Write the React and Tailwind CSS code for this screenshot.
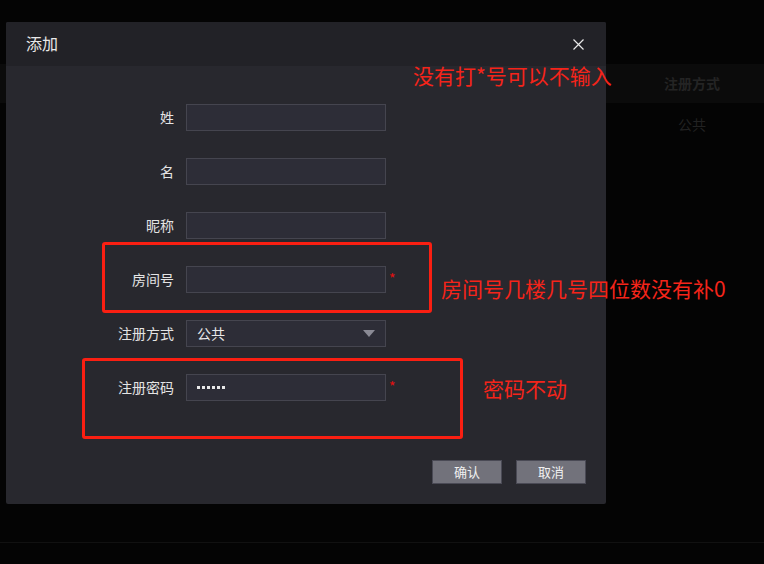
const fields = [
  { label: '姓' },
  { label: '名' },
  { label: '昵称' },
  { label: '房间号', required: true },
  { label: '注册方式', select: '公共' },
  { label: '注册密码', required: true, password: 6 },
]

function CloseIcon() {
  return (
    <svg width="11" height="11" viewBox="0 0 11 11" fill="none" stroke="#e8e8e8" strokeWidth="1.2">
      <path d="M0.5 0.5 L10.5 10.5 M10.5 0.5 L0.5 10.5" />
    </svg>
  )
}

function Field({ field }) {
  return (
    <div className="flex items-center">
      <span className="w-[80px] pb-[2px] text-right text-[14px] leading-none text-[#e4e4e4]">{field.label}</span>
      <div className="ml-3 flex h-[27px] w-[200px] items-center border border-[#45454f] bg-[#2d2d37] px-[10px]">
        {field.select && (
          <>
            <span className="flex-1 pb-[2px] text-[14px] leading-none text-[#e8e8e8]">{field.select}</span>
            <svg width="12" height="7" viewBox="0 0 12 7">
              <path d="M0 0 H12 L6 7 Z" fill="#8a8a95" />
            </svg>
          </>
        )}
        {field.password && (
          <div className="flex gap-[2px]">
            {Array.from({ length: field.password }).map((_, i) => (
              <span key={i} className="h-[3px] w-[3px] bg-[#e8e8e8]" />
            ))}
          </div>
        )}
      </div>
      {field.required && (
        <span className="ml-[3px] self-start pt-[5px] text-[14px] leading-none text-[#e41010]">*</span>
      )}
    </div>
  )
}

export default function App() {
  return (
    <div className="relative h-[564px] w-[764px] overflow-hidden bg-[#040404] font-['Noto_Sans_CJK_SC','Noto_Sans',sans-serif]">
      {/* page behind the dialog */}
      <div className="pt-[64px]">
        <div className="flex h-[39px] justify-end bg-[#0b0b0b]">
          <div className="flex w-[144px] items-center justify-center text-[14px] font-bold text-[#242424]">注册方式</div>
        </div>
        <div className="flex h-[440px] justify-end border-b border-[#111111]">
          <div className="flex h-[42px] w-[144px] items-center justify-center text-[14px] text-[#222222]">公共</div>
        </div>
      </div>

      {/* dialog */}
      <div className="absolute left-[6px] top-[22px] w-[600px] overflow-hidden rounded-[2px] bg-[#28282e]">
        <div className="flex h-[44px] items-center justify-between bg-[#222227] pl-[20px] pr-[22px]">
          <span className="pb-[2px] text-[16px] leading-none text-[#e8e8e8]">添加</span>
          <CloseIcon />
        </div>
        <div className="flex flex-col gap-[27px] pl-[88px] pt-[38px]">
          {fields.map((f) => (
            <Field key={f.label} field={f} />
          ))}
        </div>
        <div className="flex justify-end gap-[14px] pb-[20px] pr-[20px] pt-[59px]">
          <button className="h-[24px] w-[70px] border border-[#4a4a55] bg-[#72727b] pb-[1px] text-[13px] leading-none text-[#f0f0f0]">确认</button>
          <button className="h-[24px] w-[70px] border border-[#4a4a55] bg-[#72727b] pb-[1px] text-[13px] leading-none text-[#f0f0f0]">取消</button>
        </div>
      </div>

      {/* annotations */}
      <div className="absolute left-[413px] top-[65px] text-[21px] leading-none text-[#f5241a]">没有打*号可以不输入</div>
      <div className="absolute left-[102px] top-[242px] h-[71px] w-[330px] rounded-[3px] border-[3px] border-[#fa1f12]" />
      <div className="absolute left-[441px] top-[278px] text-[21px] leading-none text-[#f5241a]">房间号几楼几号四位数没有补0</div>
      <div className="absolute left-[82px] top-[358px] h-[81px] w-[381px] rounded-[3px] border-[3px] border-[#fa1f12]" />
      <div className="absolute left-[483px] top-[378px] text-[21px] leading-none text-[#f5241a]">密码不动</div>
    </div>
  )
}
